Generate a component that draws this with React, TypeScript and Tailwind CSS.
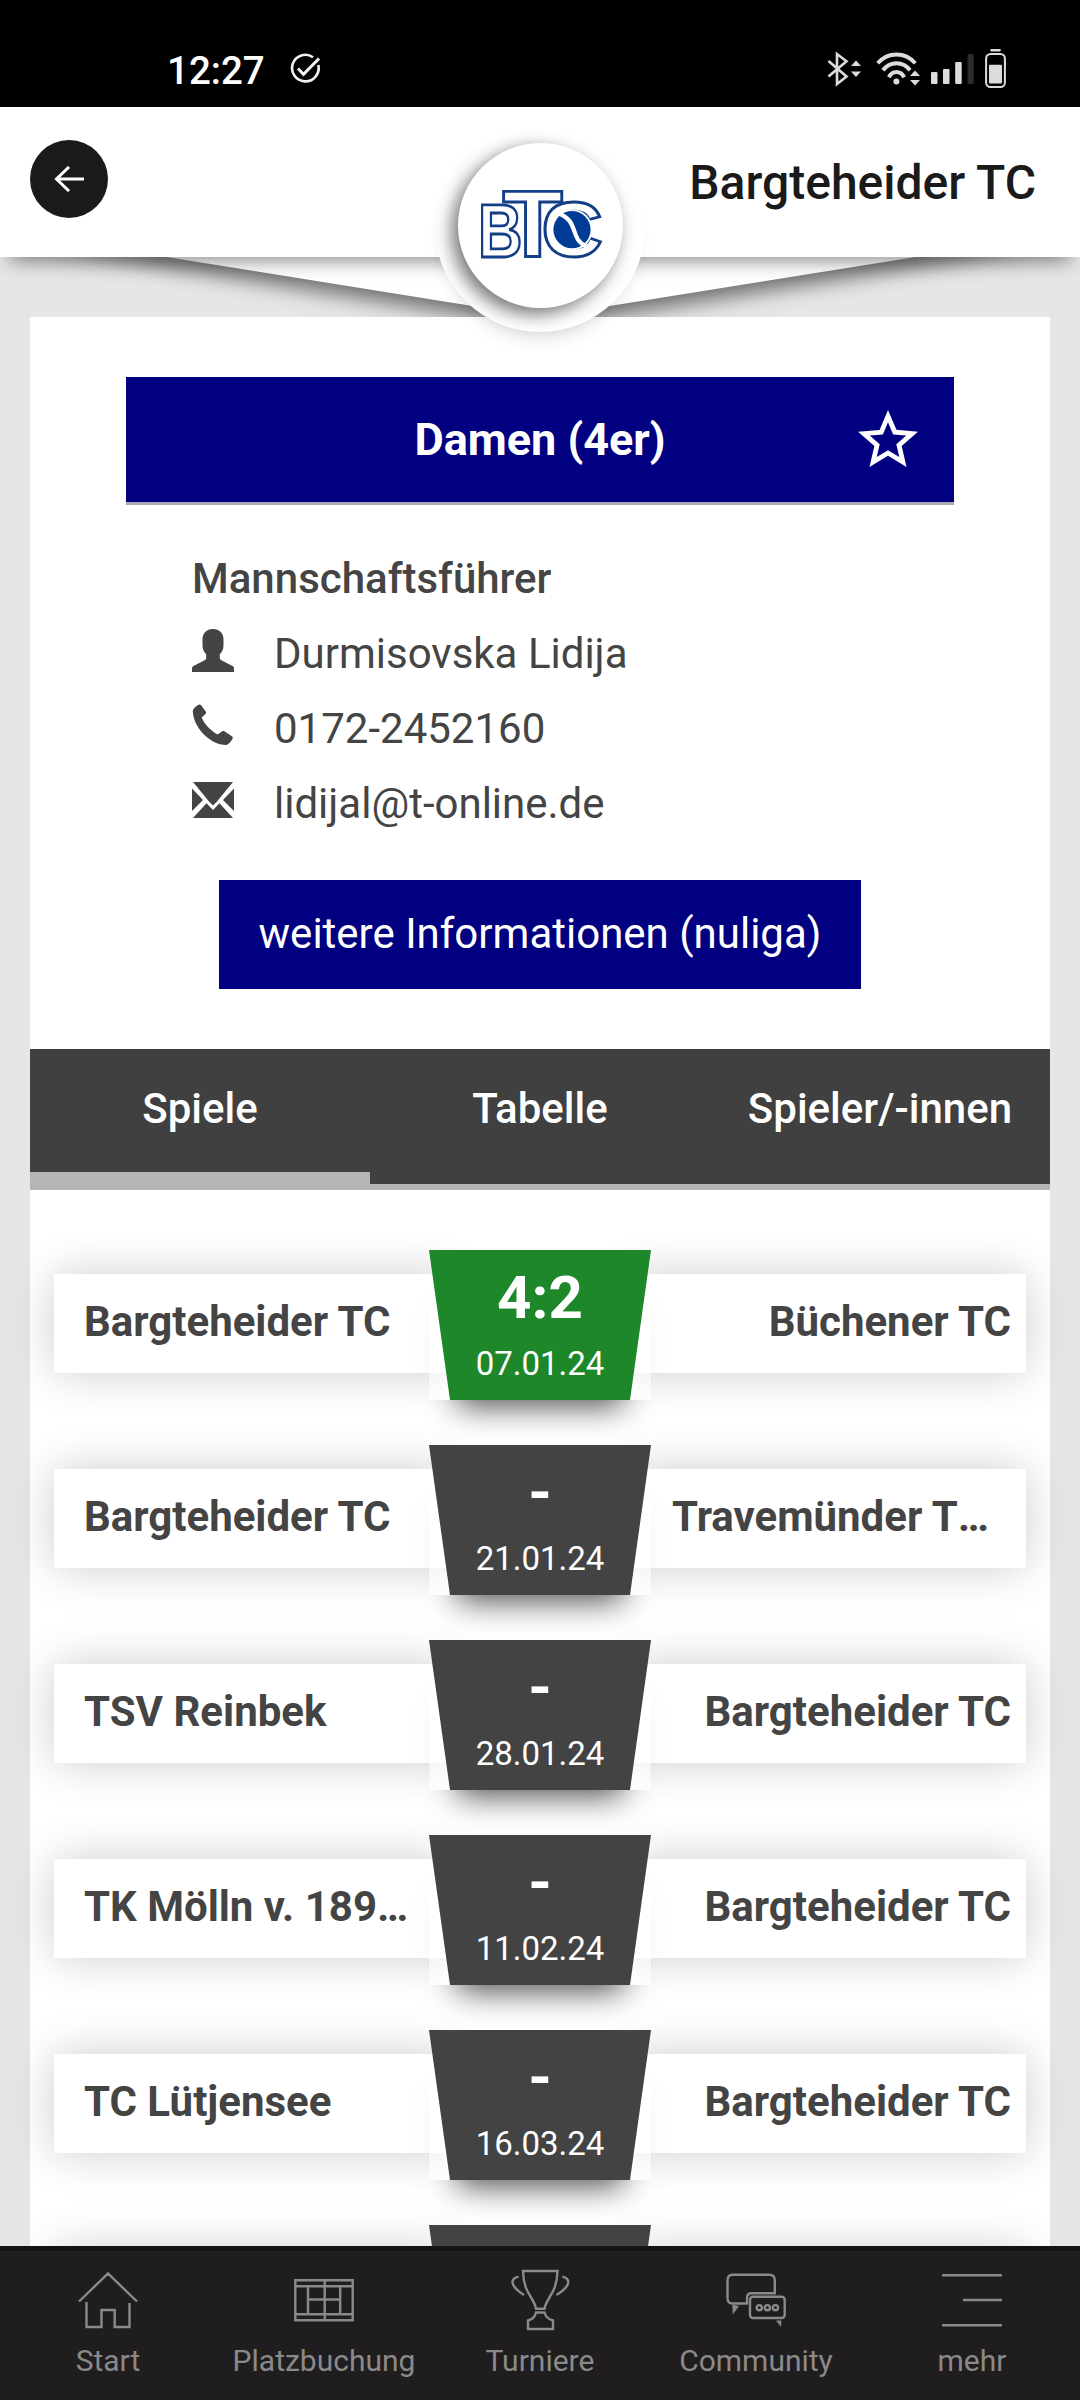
import { useState } from "react";

type Match = {
  home: string;
  guest: string;
  score: string;
  date: string;
  won?: boolean;
  guestCut?: boolean;
};

const matches: Match[] = [
  { home: "Bargteheider TC", guest: "Büchener TC", score: "4:2", date: "07.01.24", won: true },
  { home: "Bargteheider TC", guest: "Travemünder T", score: "-", date: "21.01.24", guestCut: true },
  { home: "TSV Reinbek", guest: "Bargteheider TC", score: "-", date: "28.01.24" },
  { home: "TK Mölln v. 189…", guest: "Bargteheider TC", score: "-", date: "11.02.24" },
  { home: "TC Lütjensee", guest: "Bargteheider TC", score: "-", date: "16.03.24" },
  { home: "", guest: "", score: "", date: "" },
];

const tabs = ["Spiele", "Tabelle", "Spieler/-innen"];

function StatusBar() {
  return (
    <div className="flex h-[107px] shrink-0 items-start bg-black pl-[167px] text-white">
      <span className="mt-[47px] w-[98px] text-[38.5px] leading-[48px] font-medium">12:27</span>
      <svg className="mt-[53px] ml-[25px]" width="31" height="31" viewBox="0 0 31 31" fill="none" stroke="#f2f2f2" strokeWidth="2.6">
        <path d="M23 4.2A13.3 13.3 0 1 0 28.3 12" />
        <path d="M8 15.5l5.5 5.8L29 5.5" strokeWidth="3" />
      </svg>
      <div className="mt-[48px] mr-[74px] ml-auto flex text-[#dcdcdc]">
        <svg width="34" height="42" viewBox="0 0 34 42" fill="currentColor">
          <path d="M1.5 13L19.5 28.5L10 36V6L19.5 13.2L1.5 28.5" fill="none" stroke="currentColor" strokeWidth="2.6" />
          <path d="M24 18h10l-5-5.5zM24 23.5h10l-5 5.5z" />
        </svg>
        <svg className="ml-[15px]" width="44" height="42" viewBox="0 0 44 42" fill="currentColor">
          <g fill="none" stroke="currentColor" strokeWidth="4">
            <path d="M1.7 15.2C12 3.5 29 3.5 39.3 15.2" />
            <path d="M7 22.3C14 13 27 13 34 22.3" />
            <path d="M12.8 29.3C16.5 22.3 24.5 22.3 28.2 29.3" />
          </g>
          <circle cx="20.4" cy="33.4" r="3" />
          <path d="M34 28h10l-5-5.5zM34 32h10l-5 5.5z" />
        </svg>
        <svg className="ml-[10px]" width="44" height="42" viewBox="0 0 44 42" fill="currentColor">
          <rect x="1" y="24" width="6.5" height="12" rx="1" />
          <rect x="13" y="21" width="6.5" height="15" rx="1" />
          <rect x="25.2" y="14" width="6.5" height="22" rx="1" />
          <rect x="37.5" y="6" width="6.2" height="30" rx="1" fill="#2b2b2b" />
        </svg>
        <svg className="ml-[10px]" width="22" height="42" viewBox="0 0 22 42" fill="currentColor">
          <rect x="6.3" y="1" width="10.5" height="2.4" rx="1" />
          <rect x="2.1" y="6" width="18.8" height="33" rx="4.5" fill="none" stroke="currentColor" strokeWidth="2" />
          <rect x="5" y="16.8" width="13" height="18.8" rx="1" />
        </svg>
      </div>
    </div>
  );
}

function ClubLogo() {
  return (
    <svg
      className="ml-px overflow-visible"
      width="122"
      height="72"
      viewBox="0 0 122 72"
      fill="white"
      stroke="#123f85"
      strokeWidth="2.8"
      fontFamily="Liberation Sans, sans-serif"
      fontWeight="bold"
    >
      <text transform="translate(-2 67.6) scale(.807 1)" fontSize="76.2">B</text>
      <text transform="translate(22.4 67.6) scale(1.042 1)" fontSize="94.8">T</text>
      <text transform="translate(61.4 67.4) scale(1.1 1)" fontSize="77">C</text>
      <circle cx="92" cy="40.7" r="20.5" stroke="none" />
      <circle cx="92" cy="40.7" r="18.6" fill="#003c96" stroke="none" />
      <path d="M77 24C100 31 89 50 106 57" fill="none" stroke="white" strokeWidth="4.2" />
    </svg>
  );
}

function Header() {
  return (
    <header className="relative z-10 flex h-[150px] shrink-0 items-start justify-between bg-white pt-[33px] pr-[44px] pl-[30px] shadow-[0_14px_18px_-10px_rgba(0,0,0,0.45)]">
      <button className="flex h-[78px] w-[78px] items-center justify-center rounded-full bg-[#1a1a18]">
        <svg width="30" height="26" viewBox="0 0 30 26" fill="none" stroke="white" strokeWidth="3">
          <path d="M15 1L2.5 13L15 25M2.5 13H30" />
        </svg>
      </button>
      <h1 className="mt-[15px] text-[48px] leading-[56px] font-medium text-[#1a1a1a]">Bargteheider TC</h1>

      {/* Club badge hanging over the lower header edge */}
      <div className="absolute top-[15px] left-[435px] flex h-[210px] w-[210px] items-center justify-center rounded-full bg-white pb-[4px] shadow-[0_16px_20px_-14px_rgba(0,0,0,0.2)]">
        <div className="flex h-[165px] w-[165px] items-center justify-center rounded-full bg-white shadow-[-6px_6px_18px_rgba(0,0,0,0.55)]">
          <ClubLogo />
        </div>
      </div>
    </header>
  );
}

function UserIcon() {
  return (
    <svg width="42" height="43" viewBox="0 0 42 43" fill="currentColor">
      <path d="M21 0c6.5 0 10.5 4.300 10.500 10.500v6c0 4-1.500 6.500-3.700 8.700v3.500c0 1.300.5 2 1.600 2.600L40.500 37c1 .6 1.500 1.500 1.500 2.700V43H0v-3.300C0 38.500.5 37.600 1.500 37l11.100-5.700c1.100-.6 1.600-1.300 1.600-2.600v-3.500c-2.200-2.200-3.700-4.700-3.700-8.700v-6C10.500 4.300 14.500 0 21 0z" />
    </svg>
  );
}

function PhoneIcon() {
  return (
    <svg width="42" height="42" viewBox="0 0 42 42" fill="currentColor">
      <path d="M6.500.8C7.500.1 8.400.3 9.200 1.200l4.500 6.300c.6.9.5 1.700-.3 2.500l-3.700 3.400c2.800 6.700 8.500 12.700 16 17.200l4.200-3.200c.8-.6 1.600-.6 2.500-.1l7.500 5c1 .7 1.200 1.500.6 2.500-1.700 3.200-3.800 5.300-6 6.300C17.500 41 .8 22.500.8 6.500 1.700 4 4 2.300 6.500.8z" />
    </svg>
  );
}

function MailIcon() {
  return (
    <svg width="42" height="36" viewBox="0 0 42 36" fill="currentColor">
      <path d="M1 0h40L25 19.500l-4 4-4-4zM0 6.500l11 11.500L0 29zM42 6.500L31 18l11 11zM1 36l13.500-14.700L21 28l6.500-6.700L41 36z" />
    </svg>
  );
}

function TeamInfo() {
  return (
    <section className="pt-[60px]">
      <div className="mx-auto flex h-[128px] w-[828px] items-center justify-center border-b-3 border-[#a9a9b8] bg-[#000080] text-[45px] font-bold text-white">
        <span className="ml-[96px] flex-1 text-center">Damen (4er)</span>
        <svg className="mr-[36px] mb-[2px]" width="60" height="57" viewBox="2 2 20 19" fill="white">
          <path d="M22 9.240l-7.190-.62L12 2 9.190 8.630 2 9.240l5.460 4.730L5.820 21 12 17.270 18.180 21l-1.630-7.030L22 9.240zM12 15.400l-3.760 2.270 1-4.280-3.320-2.880 4.380-.38L12 6.100l1.710 4.040 4.380.38-3.320 2.880 1 4.280L12 15.400z" />
        </svg>
      </div>

      <div className="mt-[36px] pl-[162px] text-[42px] leading-[75px] text-[#444]">
        <h2 className="font-medium">Mannschaftsführer</h2>
        <div className="flex">
          <span className="w-[82px] pt-[13px]"><UserIcon /></span>
          <span>Durmisovska Lidija</span>
        </div>
        <div className="flex">
          <span className="w-[82px] pt-[13px]"><PhoneIcon /></span>
          <span>0172-2452160</span>
        </div>
        <div className="flex">
          <span className="w-[82px] pt-[16px]"><MailIcon /></span>
          <span>lidijal@t-online.de</span>
        </div>
      </div>

      <button className="mx-auto mt-[39px] block h-[109px] w-[642px] bg-[#000080] pb-[2px] text-[42px] text-white">
        weitere Informationen (nuliga)
      </button>
    </section>
  );
}

function MatchRow({ match }: { match: Match }) {
  return (
    <div className="flex h-[150px] shrink-0 items-center justify-center">
      <div className="mb-[3px] h-[99px] w-[396px] bg-white pl-[30px] text-[42px] leading-[95px] font-bold whitespace-nowrap text-[#444] shadow-[0_0_45px_rgba(0,0,0,0.2)]">
        {match.home}
      </div>
      <div className="relative z-10 -mx-[21px] h-[150px] w-[222px] bg-linear-to-b from-transparent from-16% to-white/50 to-16% shadow-[0_34px_30px_-28px_rgba(0,0,0,0.7)]">
        <div
          className={`h-full text-center text-white [clip-path:polygon(0_0,100%_0,201px_100%,21px_100%)] ${
            match.won ? "bg-[#1d872a]" : "bg-[#434343]"
          }`}
        >
          <div className="text-[60px] leading-[96px] font-bold">{match.score}</div>
          <div className="text-[33px] leading-[36px]">{match.date}</div>
        </div>
      </div>
      <div className="mb-[3px] h-[99px] w-[396px] bg-white pr-[15px] pl-[42px] text-[42px] leading-[95px] font-bold whitespace-nowrap text-[#444] shadow-[0_0_45px_rgba(0,0,0,0.2)]">
        <div className={match.guestCut ? "text-left" : "text-right"}>
          {match.guest}
          {match.guestCut && <span className="inline-block">…</span>}
        </div>
      </div>
    </div>
  );
}

function NavItem({ label, children }: { label: string; children: React.ReactNode }) {
  return (
    <div className="flex w-[216px] flex-col items-center">
      <svg className="mt-[17px]" width="60" height="64" viewBox="0 0 60 64" fill="none" stroke="currentColor" strokeWidth="2.4">
        {children}
      </svg>
      <span className="mt-[11px] text-[30px] leading-[36px]">{label}</span>
    </div>
  );
}

function BottomNav() {
  return (
    <nav className="relative z-20 flex h-[154px] shrink-0 border-t-5 border-[#151415] bg-[#1f1d1e] text-[#8b8989]">
      <NavItem label="Start">
        <path d="M1 33.500L30 5.500L59 33.500M8.500 34V59H23.500V42H36.700V59H51.500V35" />
      </NavItem>
      <NavItem label="Platzbuchung">
        <path d="M1.300 12.300H58.700V52.300H1.300ZM1.300 18.300H58.700M1.300 46.300H58.700M30.700 12V52M14 18V46M46.200 18V46M14 31.500H46.200" />
      </NavItem>
      <NavItem label="Turniere">
        <path d="M13 3H47.500C47 26 36.500 29 34.500 40.700H26C24 29 13.500 26 13 3ZM26 44.500H34.500C36 50 39 51.500 43 52.500V61H18V52.500C22 51.500 25 49 26 44.500Z" />
        <path d="M8.600 8.700C-.5 11 0 18 14 27M52.400 8.700C61 11 61 18 46.500 27" />
      </NavItem>
      <NavItem label="Community">
        <path d="M21 35.500H6.500Q1.500 35.500 1.500 30V12.500Q1.500 6.800 6.500 6.800H43.500Q48.800 6.800 48.800 12.500V25.300H25.500Q21 25.300 21 30Z" />
        <rect x="24" y="28.700" width="34.700" height="21.300" rx="3" />
        <circle cx="33.300" cy="39.700" r="2.600" />
        <circle cx="41.400" cy="39.700" r="2.600" />
        <circle cx="49.500" cy="39.700" r="2.600" />
        <path d="M6.300 36.700L13 38L6.800 46.500ZM50 52.500H55.400L55 59Z" fill="currentColor" stroke="none" />
      </NavItem>
      <NavItem label="mehr">
        <path d="M0 7.300H60M21 32H60M0 57.300H60" strokeWidth="2.600" />
      </NavItem>
    </nav>
  );
}

export default function App() {
  const [tab, setTab] = useState("Spiele");

  return (
    <div className="flex h-[2400px] w-[1080px] flex-col overflow-hidden bg-[#e6e6e6] font-['Roboto',sans-serif]">
      <StatusBar />
      <Header />

      <main className="relative flex-1 overflow-hidden px-[30px] pt-[60px]">
        {/* Arrow under the header that points at the badge */}
        <svg
          className="absolute top-0 left-0 overflow-visible drop-shadow-[0_10px_10px_rgba(0,0,0,0.52)]"
          width="1080"
          height="62"
          viewBox="0 0 1080 62"
          fill="white"
        >
          <path d="M42 -20H1041L541 60Z" />
        </svg>

        <div className="relative h-[2100px] bg-white">
          <TeamInfo />

          <div className="mt-[60px] flex border-b-6 border-[#b5b5b5] bg-[#404040]">
            {tabs.map((name) => (
              <button
                key={name}
                onClick={() => setTab(name)}
                className={`h-[135px] w-[340px] border-b-12 pb-[4px] text-[42px] font-medium text-white ${
                  tab === name ? "border-[#b5b5b5]" : "border-transparent"
                }`}
              >
                {name}
              </button>
            ))}
          </div>

          <div className="flex flex-col gap-[45px] pt-[60px]">
            {matches.map((match, i) => (
              <MatchRow key={i} match={match} />
            ))}
          </div>
        </div>
      </main>

      <BottomNav />
    </div>
  );
}
